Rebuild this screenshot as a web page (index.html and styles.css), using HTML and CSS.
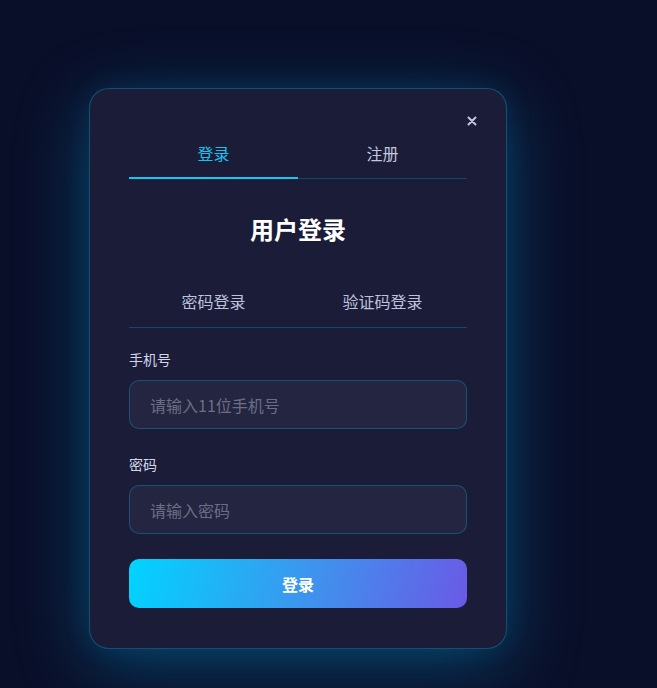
FILE: index.html
```html
<!DOCTYPE html>
<html lang="zh-CN">
<head>
<meta charset="utf-8">
<title>用户登录</title>
<link rel="stylesheet" href="styles.css">
</head>
<body>
<div class="stage">
  <div class="modal">
    <button class="close" aria-label="关闭">
      <svg width="10" height="10" viewBox="0 0 10 10"><path d="M1.5 1.5 L8.5 8.5 M8.5 1.5 L1.5 8.5" stroke="#c4c8e0" stroke-width="2" stroke-linecap="round"/></svg>
    </button>
    <div class="tabs">
      <div class="tab active">登录</div>
      <div class="tab">注册</div>
    </div>
    <h2 class="title">用户登录</h2>
    <div class="subtabs">
      <div class="subtab">密码登录</div>
      <div class="subtab">验证码登录</div>
    </div>
    <div class="field">
      <label class="label">手机号</label>
      <input class="input" type="text" placeholder="请输入11位手机号">
    </div>
    <div class="field">
      <label class="label">密码</label>
      <input class="input" type="password" placeholder="请输入密码">
    </div>
    <button class="submit">登录</button>
  </div>
</div>
</body>
</html>
```

FILE: styles.css
```css
html, body {
  margin: 0;
  padding: 0;
  background: #0a0f29;
  font-family: "Noto Sans CJK SC", "Noto Sans", "Liberation Sans", sans-serif;
}
.stage {
  min-height: 688px;
  box-sizing: border-box;
  padding: 88px 0 0 89px;
}
.modal {
  position: relative;
  width: 418px;
  box-sizing: border-box;
  padding: 39px 39px 40px;
  background: #1a1c38;
  border: 1px solid rgba(0, 190, 240, 0.32);
  border-radius: 20px;
  box-shadow: 0 16px 70px rgba(0, 170, 230, 0.34), 0 0 30px rgba(0, 170, 230, 0.1);
}
.close {
  position: absolute;
  top: 22px;
  right: 24px;
  width: 20px;
  height: 20px;
  padding: 0;
  border: none;
  background: transparent;
  display: flex;
  align-items: center;
  justify-content: center;
  cursor: pointer;
}
.tabs {
  display: flex;
  border-bottom: 1px solid rgba(0, 190, 240, 0.28);
}
.tab {
  flex: 1;
  text-align: center;
  font-size: 16px;
  line-height: 24px;
  padding: 13px 0 13px;
  color: #c3c6de;
  position: relative;
}
.tab.active {
  color: #17c3ee;
}
.tab.active::after {
  content: "";
  position: absolute;
  left: 0;
  right: 0;
  bottom: -1px;
  height: 2px;
  background: #18c6f2;
}
.title {
  margin: 34px 0 0;
  text-align: center;
  font-size: 24px;
  line-height: 32px;
  font-weight: 700;
  color: #ffffff;
}
.subtabs {
  display: flex;
  margin-top: 44px;
  border-bottom: 1px solid rgba(0, 190, 240, 0.28);
}
.subtab {
  flex: 1;
  text-align: center;
  font-size: 16px;
  line-height: 24px;
  padding-bottom: 14px;
  color: #bfc2db;
}
.field {
  display: flex;
  flex-direction: column;
}
.subtabs + .field {
  margin-top: 21px;
}
.field + .field {
  margin-top: 25px;
}
.label {
  font-size: 14px;
  line-height: 20px;
  color: #d3d6ea;
  margin-bottom: 11px;
}
.input {
  height: 49px;
  box-sizing: border-box;
  border: 1px solid rgba(0, 190, 240, 0.3);
  border-radius: 10px;
  background: #242540;
  padding: 0 20px;
  font-family: inherit;
  font-size: 16px;
  color: #e0e2f0;
  outline: none;
}
.input::placeholder {
  color: #6c6e85;
}
.submit {
  display: block;
  width: 100%;
  height: 49px;
  margin-top: 25px;
  border: none;
  border-radius: 10px;
  background: linear-gradient(105deg, #00d4ff 0%, #3a98ee 50%, #6a5ae6 100%);
  color: #ffffff;
  font-family: inherit;
  font-size: 16px;
  font-weight: 700;
  cursor: pointer;
}
```
